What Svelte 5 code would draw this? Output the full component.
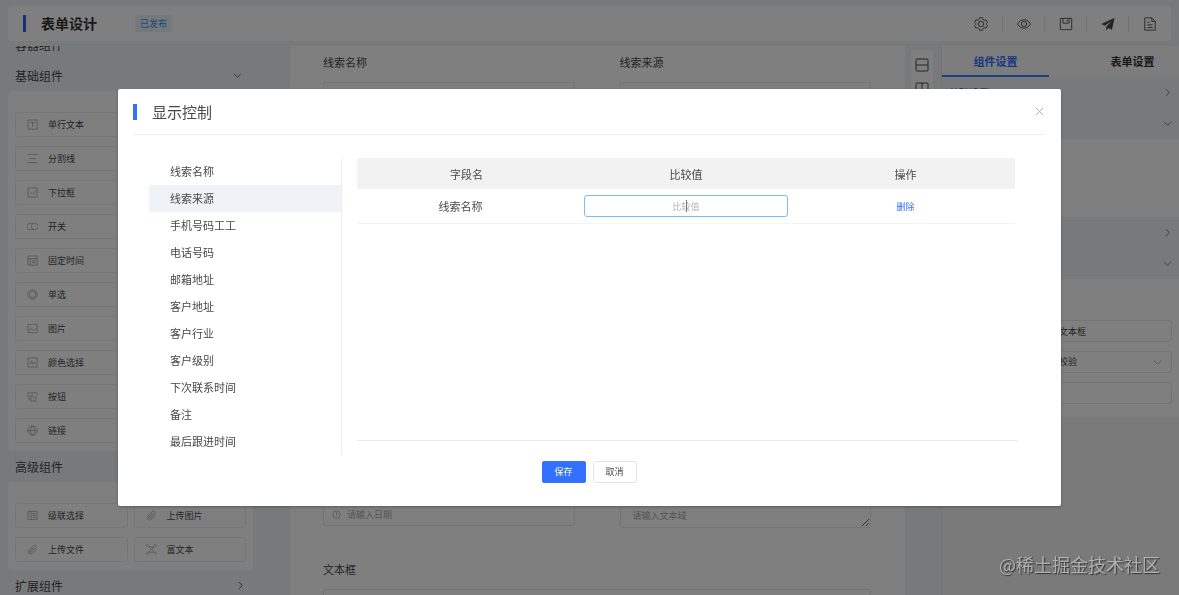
<script>
  let fields = $state([
    '线索名称',
    '线索来源',
    '手机号码工工',
    '电话号码',
    '邮箱地址',
    '客户地址',
    '客户行业',
    '客户级别',
    '下次联系时间',
    '备注',
    '最后跟进时间'
  ]);
  let selected = $state('线索来源');
  let rows = $state([{ name: '线索名称', value: '' }]);
  let open = $state(true);
  let tab = $state('组件设置');

  const tabs = ['组件设置', '表单设置'];

  const basic = [
    ['单行文本', 'text'],
    ['分割线', 'lines'],
    ['下拉框', 'check'],
    ['开关', 'switch'],
    ['固定时间', 'table'],
    ['单选', 'radio'],
    ['图片', 'image'],
    ['颜色选择', 'color'],
    ['按钮', 'button'],
    ['链接', 'globe']
  ];

  const advanced = [
    ['级联选择', 'cascade'],
    ['上传图片', 'clip'],
    ['上传文件', 'clip'],
    ['富文本', 'rich']
  ];

  // 12x12 line icons
  const icons = {
    text: 'M1 1h10v10H1z M4 4.5V3.5h4v1 M6 3.5v5',
    lines: 'M.5 1.500h11 M2.500 6h7 M.5 10.500h11',
    check: 'M1 1h10v10H1z M3 5l3 3 4-4',
    switch: 'M3.500 2.500h5a3.500 3.500 0 010 7h-5a3.500 3.500 0 010-7z M6.500 3a3.500 3.500 0 000 6',
    table: 'M1 1h10v10H1z M1 4h10 M3.5 4v7 M5.5 6.5h4 M5.5 8.5h4',
    radio: 'M6 .8a5.2 5.2 0 100 10.4A5.2 5.2 0 006 .8z M6 2.600a3.400 3.400 0 100 6.800 3.400 3.400 0 000-6.800z',
    image: 'M1 1.5h10v9H1z M1.5 8l3-2 2.5 2 3.5-2.5 M3.5 3.5v1',
    color: 'M1 1h10v10H1z M3 8l2-4 2 4 M3.6 6.8h2.8 M8.5 5v3',
    button: 'M1 2h10v4 M1 2v4h2 M3 10.5L2 8h1.500 M4 5l2-1 1 3 3 .5-.5 3.500H4.500z',
    globe: 'M6 .8a5.2 5.2 0 100 10.4A5.2 5.2 0 006 .8z M.8 6h10.4 M6 .8c-3 3-3 7.400 0 10.400 M6 .8c3 3 3 7.400 0 10.400',
    cascade: 'M1 1.500h10v9H1z M4.500 1.500v9 M6 4h3.500 M6 6h3.500 M6 8h3.500 M2 4h1 M2 6h1',
    clip: 'M10.500 5.500l-4.700 4.700a2.600 2.600 0 01-3.700-3.700l5-5a1.800 1.800 0 012.500 2.500l-4.800 4.800a.8.8 0 01-1.200-1.200l4.200-4.200',
    rich: 'M1 3V1h2 M9 1h2v2 M11 9v2H9 M3 11H1V9 M3 3l6 6 M9 3L3 9 M3 3h6 M3 9h6'
  };

  function removeRow(i) {
    rows.splice(i, 1);
  }
</script>

{#snippet chevron(dir)}
  <svg class="chevron {dir}" viewBox="0 0 10 10" aria-hidden="true"><path d="M1 3l4 4 4-4" /></svg>
{/snippet}

{#snippet widgets(list, single)}
  <div class="widgets">
    {#each list as [label, icon]}
      <button class="widget" class:single>
        <svg viewBox="0 0 12 12" aria-hidden="true"><path d={icons[icon]} /></svg>
        {label}
      </button>
    {/each}
  </div>
{/snippet}

<div class="page">
  <header class="topbar">
    <h1>表单设计</h1>
    <span class="tag">已发布</span>
    <nav class="actions">
      <button aria-label="设置">
        <svg viewBox="0 0 16 16"><path d="M5.800 2.900L6.400 .8h3.200l.6 2.100 1.500.9 2.100-.6 1.600 2.800L13.900 7.500v1l1.500 1.500-1.600 2.800-2.100-.6-1.500.9-.6 2.100H6.400l-.6-2.100-1.500-.9-2.100.6L.6 10l1.500-1.500v-1L.6 6l1.600-2.800 2.100.6z" /><circle cx="8" cy="8" r="3" /></svg>
      </button>
      <button aria-label="预览">
        <svg viewBox="0 0 16 16"><path d="M.6 8C4 1.500 12 1.500 15.400 8 12 14.500 4 14.500.6 8z" /><circle cx="8" cy="8" r="3" /></svg>
      </button>
      <button aria-label="保存">
        <svg viewBox="0 0 16 16"><path d="M1.500 1.500h13v13h-13z M4.500 1.500V7h7V1.500 M9.300 3v2" /></svg>
      </button>
      <button aria-label="发布">
        <svg class="solid" viewBox="0 0 16 16"><path d="M15.500 .8L.5 8l3.700 2L12 4.500l-6 6.500v4.500l2.300-3 4.200 2z" /></svg>
      </button>
      <button aria-label="文档">
        <svg viewBox="0 0 16 16"><path d="M2 1h8l4 4v10H2z M10 1v4h4 M5 6h2.500 M5 9h6 M5 12h6" /></svg>
      </button>
    </nav>
  </header>

  <main class="workspace">
    <aside class="sidebar">
      <div class="groups">
        <h2>容器组件</h2>
        <h2>基础组件 <span class="accent">{@render chevron('down')}</span></h2>
        {@render widgets(basic, true)}
        <h2>高级组件</h2>
        {@render widgets(advanced, false)}
        <h2>扩展组件 {@render chevron('right')}</h2>
      </div>
    </aside>

    <section class="canvas">
      <div class="field">
        <label for="f-name">线索名称</label>
        <input id="f-name" />
      </div>
      <div class="field">
        <label for="f-source">线索来源</label>
        <input id="f-source" />
      </div>
      <div class="field date">
        <div class="with-icon">
          <svg viewBox="0 0 12 12" aria-hidden="true"><circle cx="6" cy="6" r="5" /><path d="M6 3v3l2 1.500" /></svg>
          <input aria-label="日期" placeholder="请输入日期" />
        </div>
      </div>
      <div class="field area">
        <textarea aria-label="文本域" placeholder="请输入文本域"></textarea>
      </div>
      <div class="field wide">
        <label for="f-text">文本框</label>
        <input id="f-text" />
      </div>
    </section>

    <div class="layouts">
      <button aria-label="上下布局">
        <svg viewBox="0 0 14 14"><rect x="1" y="1" width="12" height="12" rx="1" /><path d="M1 7h12" /></svg>
      </button>
      <button aria-label="左右布局">
        <svg viewBox="0 0 14 14"><rect x="1" y="1" width="12" height="12" rx="1" /><path d="M7 1v12" /></svg>
      </button>
    </div>

    <aside class="settings">
      <div class="tabs">
        {#each tabs as name}
          <button class:active={tab === name} onclick={() => (tab = name)}>{name}</button>
        {/each}
      </div>
      <div class="row">基础设置 {@render chevron('right')}</div>
      <div class="row">{@render chevron('down')}</div>
      <div class="panel short"></div>
      <div class="row">{@render chevron('right')}</div>
      <div class="row">{@render chevron('down')}</div>
      <div class="panel props">
        <input aria-label="标题" value="文本框" />
        <div class="select">
          <select aria-label="校验"><option>校验</option></select>
          {@render chevron('down')}
        </div>
        <input aria-label="默认值" />
      </div>
    </aside>
  </main>
</div>

{#if open}
  <div class="mask">
    <div class="dialog" role="dialog" aria-labelledby="dialog-title">
      <div class="dialog-head">
        <h3 id="dialog-title">显示控制</h3>
        <button class="close" aria-label="关闭" onclick={() => (open = false)}>
          <svg viewBox="0 0 10 10"><path d="M1 1l8 8M9 1L1 9" /></svg>
        </button>
      </div>

      <div class="dialog-body">
        <ul class="field-list">
          {#each fields as name}
            <li>
              <button class:active={selected === name} onclick={() => (selected = name)}>{name}</button>
            </li>
          {/each}
        </ul>

        <div class="conditions">
          <table>
            <thead>
              <tr><th>字段名</th><th>比较值</th><th>操作</th></tr>
            </thead>
            <tbody>
              {#each rows as row, i}
                <tr>
                  <td class="name">{row.name}</td>
                  <td>
                    <div class="compare">
                      <input aria-label="比较值" placeholder="比较值" bind:value={row.value} />
                      {#if !row.value}<span class="caret"></span>{/if}
                    </div>
                  </td>
                  <td><button class="link" onclick={() => removeRow(i)}>删除</button></td>
                </tr>
              {/each}
            </tbody>
          </table>
        </div>
      </div>

      <div class="dialog-foot">
        <button class="btn primary" onclick={() => (open = false)}>保存</button>
        <button class="btn" onclick={() => (open = false)}>取消</button>
      </div>
    </div>
  </div>
{/if}

<div class="watermark">@稀土掘金技术社区</div>

<style>
  :global(body) {
    background: #f0f3f5;
  }

  .page,
  .mask,
  .watermark {
    font-family: 'Noto Sans CJK SC', sans-serif;
    font-size: 11px;
    line-height: 16px;
    color: #484848;
  }

  .page *,
  .mask * {
    box-sizing: border-box;
  }

  button,
  input,
  select,
  textarea {
    font: inherit;
    color: inherit;
    margin: 0;
  }

  button {
    background: none;
    border: none;
    padding: 0;
    cursor: pointer;
  }

  svg {
    display: block;
    fill: none;
    stroke: currentColor;
    flex-shrink: 0;
  }

  h1,
  h2,
  h3 {
    margin: 0;
    font-weight: 400;
  }

  .page {
    height: 100vh;
    overflow: hidden;
    display: flex;
    flex-direction: column;
  }

  .topbar {
    flex: none;
    display: flex;
    align-items: center;
    height: 35px;
    margin: 6px 8px 5px;
    padding: 0 1px 0 15px;
    background: #fff;
    border-radius: 4px;
  }

  .topbar h1 {
    padding-left: 15px;
    border-left: 3px solid #2f62ff;
    font-size: 14px;
    line-height: 17px;
    font-weight: 700;
    color: #333;
  }

  .tag {
    margin-left: 38px;
    padding: 0 5px;
    background: #e9f2fa;
    color: #3d90e8;
    font-size: 9px;
    line-height: 17px;
    border-radius: 2px;
  }

  .actions {
    display: flex;
    margin-left: auto;
  }

  .actions button {
    width: 42px;
    display: flex;
    justify-content: center;
  }

  .actions button + button {
    border-left: 1px solid #e4e4e4;
  }

  .actions svg {
    width: 14px;
    height: 16px;
  }

  .actions .solid {
    fill: currentColor;
    stroke: none;
  }

  .workspace {
    flex: 1;
    min-height: 0;
    display: flex;
  }

  .sidebar {
    width: 245px;
    margin: 0 37px 0 8px;
    overflow: hidden;
    flex-shrink: 0;
  }

  .groups {
    margin-top: -17px;
  }

  h2 {
    display: flex;
    align-items: center;
    justify-content: space-between;
    height: 31px;
    padding: 0 8px 0 7px;
    font-size: 12px;
  }

  .accent {
    color: #4468b8;
    padding-right: 3px;
  }

  .chevron {
    width: 9px;
    height: 9px;
  }

  .chevron.right {
    transform: rotate(-90deg);
  }

  .widgets {
    display: grid;
    grid-template-columns: 1fr 1fr;
    gap: 9px 6px;
    padding: 21px 7px 8px;
    background: #fff;
    border-radius: 4px;
  }

  .widget {
    display: flex;
    align-items: center;
    gap: 10px;
    height: 25px;
    padding-left: 11px;
    border: 1px solid #ececec;
    border-radius: 3px;
    font-size: 9px;
  }

  .widget.single {
    grid-column: 1;
  }

  .widget svg {
    width: 11px;
    height: 11px;
    color: #a0a0a0;
    stroke-width: 0.8;
  }

  .canvas {
    flex: 1;
    display: grid;
    grid-template-columns: 1fr 1fr;
    grid-template-rows: repeat(5, 84px) 87px auto;
    column-gap: 45px;
    padding: 8px 34px 0 33px;
    background: #fff;
  }

  .field {
    display: flex;
    flex-direction: column;
    gap: 12px;
  }

  .field input,
  .field textarea {
    width: 100%;
    height: 24px;
    border: 1px solid #e8e8e8;
    border-radius: 2px;
    background: transparent;
    padding: 0 23px;
    font-size: 9px;
    outline: none;
  }

  .field textarea {
    height: 26px;
    padding: 5px 12px;
  }

  .field ::placeholder {
    color: #aaa;
  }

  .date,
  .area {
    grid-row: 6;
    padding-top: 28px;
  }

  .wide {
    grid-row: 7;
    grid-column: 1 / -1;
  }

  .with-icon {
    position: relative;
  }

  .with-icon svg {
    position: absolute;
    left: 9px;
    top: 8px;
    width: 9px;
    height: 9px;
    color: #aaa;
  }

  .layouts {
    align-self: flex-start;
    width: 22px;
    margin: 4px 8px 0 6px;
    padding: 8px 4px;
    display: flex;
    flex-direction: column;
    gap: 10px;
    background: #fff;
    border-radius: 2px;
  }

  .layouts svg {
    width: 14px;
    height: 14px;
  }

  .settings {
    width: 238px;
    flex-shrink: 0;
    overflow: hidden;
    border-left: 1px solid #e6e9ed;
    background: #f4f4f4;
  }

  .tabs {
    display: flex;
    gap: 30px;
    background: #fafbfc;
  }

  .tabs button {
    flex: none;
    width: 107px;
    height: 31px;
    border-bottom: 2px solid transparent;
    font-weight: 700;
    color: #333;
  }

  .tabs .active {
    color: #3370ff;
    border-color: #3380ff;
  }

  .row {
    display: flex;
    align-items: center;
    height: 31px;
    padding: 0 7px;
    background: #f0f3f5;
    font-size: 10px;
  }

  .row .chevron {
    margin-left: auto;
    color: #777;
  }

  .panel {
    background: #fff;
  }

  .short {
    height: 78px;
  }

  .props {
    display: flex;
    flex-direction: column;
    gap: 9px;
    padding: 41px 7px 13px 109px;
  }

  .props input,
  .props select {
    width: 100%;
    height: 22px;
    padding: 0 7px;
    border: 1px solid #e8e8e8;
    border-radius: 3px;
    background: transparent;
    font-size: 9px;
    appearance: none;
  }

  .select {
    position: relative;
  }

  .select .chevron {
    position: absolute;
    right: 10px;
    top: 7px;
    color: #aaa;
  }

  .mask {
    position: fixed;
    inset: 0;
    background: rgba(0, 0, 0, 0.5);
  }

  .dialog {
    width: 80%;
    margin: 15vh auto 0;
    padding: 0 16px 23px 15px;
    background: #fff;
    border-radius: 2px;
    box-shadow: 0 1px 3px rgba(0, 0, 0, 0.3);
  }

  .dialog-head {
    display: flex;
    align-items: center;
    justify-content: space-between;
    height: 46px;
    border-bottom: 1px solid #eee;
  }

  h3 {
    padding-left: 15px;
    border-left: 4px solid #3370ff;
    font-size: 15px;
  }

  .close {
    padding: 1px;
    color: #aaa;
  }

  .close svg {
    width: 9px;
    height: 9px;
  }

  .dialog-body {
    display: flex;
    gap: 15px;
    padding: 23px 27px 0 16px;
  }

  .field-list {
    flex: none;
    width: 193px;
    margin: 0;
    padding: 0;
    list-style: none;
    border-right: 1px solid #eee;
  }

  .field-list button {
    display: block;
    width: 100%;
    height: 27px;
    padding: 0 0 2px 21px;
    text-align: left;
  }

  .field-list .active {
    background: #eff2f7;
  }

  .conditions {
    flex: 1;
    margin-bottom: 14px;
    padding-right: 3px;
    border-bottom: 1px solid #eaeaea;
  }

  table {
    width: 100%;
    table-layout: fixed;
    border-collapse: collapse;
    text-align: center;
  }

  th {
    height: 31px;
    padding: 0;
    background: #f2f2f2;
    font-weight: 400;
  }

  td {
    height: 34px;
    padding: 0 8px;
    border-bottom: 1px solid #f3f3f3;
  }

  .name {
    padding-right: 20px;
  }

  .compare {
    position: relative;
  }

  .compare input {
    display: block;
    width: 100%;
    height: 22px;
    border: 1px solid #7dbcf3;
    border-radius: 3px;
    text-align: center;
    font-size: 9px;
    outline: none;
  }

  .compare ::placeholder {
    color: #b5b5b5;
  }

  .caret {
    position: absolute;
    left: 50%;
    top: 5px;
    width: 1px;
    height: 12px;
    background: #777;
  }

  .link {
    color: #3370ff;
    font-size: 9px;
  }

  .dialog-foot {
    display: flex;
    justify-content: center;
    gap: 7px;
    padding-top: 6px;
  }

  .btn {
    width: 44px;
    height: 22px;
    border: 1px solid #e4e4e4;
    border-radius: 2px;
    font-size: 9px;
  }

  .primary {
    background: #3370ff;
    border-color: #3370ff;
    color: #fff;
  }

  .watermark {
    position: fixed;
    right: 19px;
    bottom: 18px;
    font-size: 18px;
    line-height: 26px;
    color: #b0b0b0;
    text-shadow: 1px 1px 1px #333;
  }
</style>
